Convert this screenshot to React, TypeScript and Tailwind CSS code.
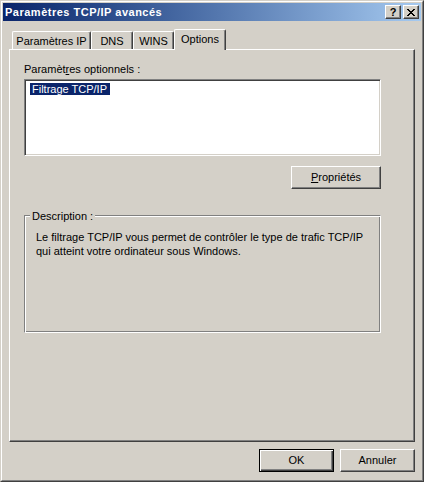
const raised =
  "border border-t-white border-l-white border-r-[#404040] border-b-[#404040] shadow-[inset_-1px_-1px_0_#808080] bg-[#d4d0c8]";

function CloseGlyph() {
  const cells = [0, 1, 2, 3, 4, 5, 6];
  return (
    <svg width="8" height="7" viewBox="0 0 8 7" shapeRendering="crispEdges">
      {cells.map((i) => (
        <rect key={"a" + i} x={i} y={i} width="2" height="1" fill="#000" />
      ))}
      {cells.map((i) => (
        <rect key={"b" + i} x={6 - i} y={i} width="2" height="1" fill="#000" />
      ))}
    </svg>
  );
}

function Tab({ label, width, active }: { label: string; width: string; active?: boolean }) {
  if (active) {
    return (
      <div
        className={`${width} h-[21px] -mb-px relative z-10 bg-[#d4d0c8] border-t border-l border-r border-t-white border-l-white border-r-[#404040] shadow-[inset_-1px_0_0_#808080] rounded-tl-[2px] rounded-tr-[2px] pt-[3px] leading-[13px] text-center`}
      >
        {label}
      </div>
    );
  }
  return (
    <div
      className={`${width} h-[18px] bg-[#d4d0c8] border-t border-l border-r border-t-white border-l-white border-r-[#404040] shadow-[inset_-1px_0_0_#808080] rounded-tl-[2px] rounded-tr-[2px] pt-[3px] leading-[13px] text-center`}
    >
      {label}
    </div>
  );
}

export default function App() {
  return (
    <div className="w-[424px] h-[482px] bg-[#d4d0c8] border border-t-[#d4d0c8] border-l-[#d4d0c8] border-r-[#404040] border-b-[#404040] font-['Liberation_Sans',Arial,sans-serif] text-[11px] text-black select-none">
      <div className="h-full border border-t-white border-l-white border-r-[#808080] border-b-[#808080] p-px flex flex-col">
        {/* title bar */}
        <div className="h-[18px] flex items-center bg-linear-to-r from-[#0a246a] to-[#a6caf0] pl-[2px] pr-[2px]">
          <span className="flex-1 text-white font-bold leading-[18px] tracking-[0.5px]">Paramètres TCP/IP avancés</span>
          <div className="flex gap-[2px]">
            <div className={`${raised} w-[16px] h-[14px] flex items-center justify-center font-bold text-[11px] leading-none`}>
              ?
            </div>
            <div className={`${raised} w-[16px] h-[14px] flex items-center justify-center`}>
              <CloseGlyph />
            </div>
          </div>
        </div>

        <div className="flex-1 flex flex-col px-[6px] pt-[8px]">
          {/* tabs */}
          <div className="flex items-end h-[20px] pl-[3px]">
            <Tab label="Paramètres IP" width="w-[79px]" />
            <Tab label="DNS" width="w-[42px]" />
            <Tab label="WINS" width="w-[41px]" />
            <Tab label="Options" width="w-[52px]" active />
          </div>

          {/* tab panel */}
          <div className="h-[393px] border border-t-white border-l-white border-r-[#404040] border-b-[#404040] shadow-[inset_-1px_-1px_0_#808080] pl-[14px] pt-[13px] flex flex-col">
            <div className="w-[357px] flex flex-col">
              <div className="leading-[13px]">
                Paramèt<span className="underline underline-offset-[1px]">r</span>es optionnels :
              </div>
              <div className="mt-[3px] h-[77px] bg-white border border-t-[#808080] border-l-[#808080] border-b-white border-r-white shadow-[inset_1px_1px_0_#404040,inset_-1px_-1px_0_#d4d0c8]">
                <div className="ml-[5px] mt-[3px] w-[80px] h-[12px] bg-[#0a246a] text-white pl-[2px] leading-[12px]">
                  Filtrage TCP/IP
                </div>
              </div>
              <div className={`${raised} self-end mt-[10px] w-[90px] h-[23px] flex items-center justify-center`}>
                <span>
                  <span className="underline underline-offset-[1px]">P</span>ropriétés
                </span>
              </div>

              <div className="relative mt-[26px] h-[118px] border border-t-[#808080] border-l-[#808080] border-b-white border-r-white shadow-[inset_1px_1px_0_white,inset_-1px_-1px_0_#808080] pl-[11px] pt-[14px] leading-[14px]">
                <span className="absolute left-[5px] -top-[6px] px-[2px] bg-[#d4d0c8] leading-[13px]">Description :</span>
                Le filtrage TCP/IP vous permet de contrôler le type de trafic TCP/IP
                <br />
                qui atteint votre ordinateur sous Windows.
              </div>
            </div>
          </div>

          {/* footer buttons */}
          <div className="mt-[7px] flex justify-end gap-[6px]">
            <div className="w-[75px] h-[23px] border border-black bg-[#d4d0c8] shadow-[inset_1px_1px_0_white,inset_-1px_-1px_0_#404040,inset_-2px_-2px_0_#808080] flex items-center justify-center">
              OK
            </div>
            <div className={`${raised} w-[75px] h-[23px] flex items-center justify-center`}>Annuler</div>
          </div>
        </div>
      </div>
    </div>
  );
}
